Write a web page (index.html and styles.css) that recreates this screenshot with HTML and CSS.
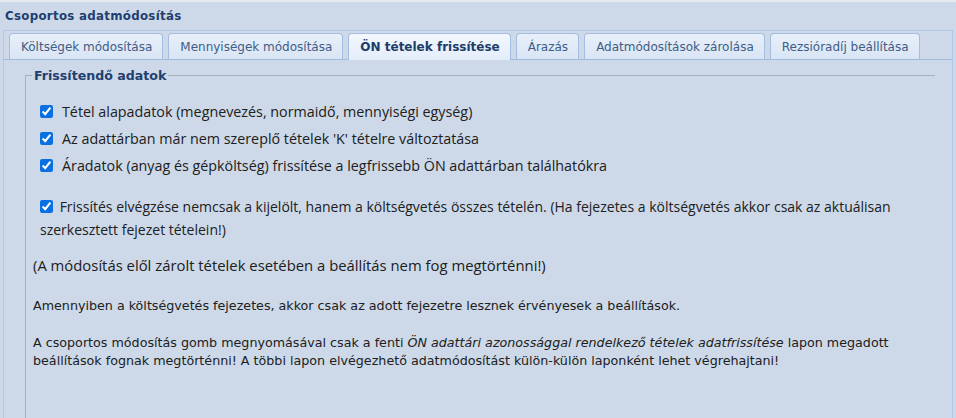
FILE: index.html
```html
<!DOCTYPE html>
<html lang="hu">
<head>
<meta charset="utf-8">
<title>Csoportos adatmódosítás</title>
<link rel="stylesheet" href="styles.css">
</head>
<body>
<div class="window">
  <div class="title">Csoportos adatmódosítás</div>
  <div class="tabctrl">
    <div class="tabstrip">
      <div class="tab">Költségek módosítása</div>
      <div class="tab">Mennyiségek módosítása</div>
      <div class="tab active">ÖN tételek frissítése</div>
      <div class="tab">Árazás</div>
      <div class="tab">Adatmódosítások zárolása</div>
      <div class="tab">Rezsióradíj beállítása</div>
    </div>
    <div class="panel">
      <fieldset class="group">
        <legend class="legend">Frissítendő adatok</legend>
        <div class="checks">
          <label class="check"><input type="checkbox" checked><span>Tétel alapadatok (megnevezés, normaidő, mennyiségi egység)</span></label>
          <label class="check"><input type="checkbox" checked><span>Az adattárban már nem szereplő tételek 'K' tételre változtatása</span></label>
          <label class="check"><input type="checkbox" checked><span>Áradatok (anyag és gépköltség) frissítése a legfrissebb ÖN adattárban találhatókra</span></label>
        </div>
        <p class="wide"><input type="checkbox" checked> Frissítés elvégzése nemcsak a kijelölt, hanem a költségvetés összes tételén. (Ha fejezetes a költségvetés akkor csak az aktuálisan szerkesztett fejezet tételein!)</p>
        <p class="note">(A módosítás elől zárolt tételek esetében a beállítás nem fog megtörténni!)</p>
        <p class="info">Amennyiben a költségvetés fejezetes, akkor csak az adott fejezetre lesznek érvényesek a beállítások.</p>
        <p class="info second">A csoportos módosítás gomb megnyomásával csak a fenti <em>ÖN adattári azonossággal rendelkező tételek adatfrissítése</em> lapon megadott beállítások fognak megtörténni! A többi lapon elvégezhető adatmódosítást külön-külön laponként lehet végrehajtani!</p>
      </fieldset>
    </div>
  </div>
</div>
</body>
</html>
```
FILE: styles.css
```css
html, body {
  margin: 0;
  padding: 0;
  height: 100%;
  background: #cdd9e8;
  overflow: hidden;
}
.window {
  height: 100%;
  display: flex;
  flex-direction: column;
  border-top: 2px solid #e6e9ee;
  box-sizing: border-box;
  font-family: "DejaVu Sans", sans-serif;
}
.title {
  font-family: "DejaVu Sans", sans-serif;
  font-weight: bold;
  font-size: 11.8px;
  letter-spacing: 0.3px;
  color: #1f3f6f;
  padding: 7px 5px 0;
  height: 21px;
  box-sizing: content-box;
}
.tabctrl {
  flex: 1;
  margin: 0 3px 0 3px;
  border: 1px solid #b3c8e6;
  border-bottom: none;
  padding-top: 2px;
  display: flex;
  flex-direction: column;
}
.tabstrip {
  display: flex;
  gap: 5px;
  padding-left: 5px;
  border-bottom: 1px solid #9fb9df;
  height: 26px;
  align-items: flex-end;
}
.tab {
  height: 26px;
  box-sizing: border-box;
  border: 1px solid #a5bde0;
  border-bottom: none;
  border-radius: 4px 4px 0 0;
  background: linear-gradient(#e8effa, #d9e5f5);
  color: #3e5d86;
  font-size: 12px;
  padding: 0 10px 0 11px;
  display: flex;
  align-items: center;
  white-space: nowrap;
}
.tab.active {
  height: 27px;
  margin-bottom: -1px;
  padding-bottom: 1px;
  background: linear-gradient(#f3f7fd, #e3edfb);
  font-weight: bold;
  color: #1d3c68;
}
.panel {
  flex: 1;
  padding: 8px 17px 0 21px;
}
.group {
  margin: 0;
  padding: 0 0 0 14px;
  border: none;
  border-top: 1px solid #a6b1bf;
  border-left: 1px solid #a6b1bf;
  height: 100%;
  box-sizing: border-box;
  min-width: 0;
}
.legend {
  font-weight: bold;
  font-size: 12.6px;
  color: #1f3f6f;
  padding: 0 2px;
  margin-left: -8px;
}
.checks {
  display: flex;
  flex-direction: column;
  gap: 8px;
  margin-top: 19px;
}
.check, .wide, .note {
  font-family: "Open Sans", sans-serif;
  font-size: 14px;
  color: #202020;
}
.check {
  display: flex;
  align-items: center;
  gap: 9px;
  height: 19px;
  font-size: 14.3px;
}
input[type="checkbox"] {
  width: 13px;
  height: 13px;
  margin: 0;
  accent-color: #0a6fe0;
}
.wide {
  margin: 20px 0 0;
  line-height: 23px;
}
.wide input {
  vertical-align: -1px;
  margin-right: 3px;
}
.note {
  font-size: 14.85px;
  margin: 14px 0 0 -7px;
  line-height: 20px;
}
.info {
  font-size: 12.7px;
  line-height: 18px;
  color: #202020;
  margin: 22px 0 0 -7px;
}
.info.second {
  margin-top: 19px;
}
.info em {
  font-style: italic;
}
```
